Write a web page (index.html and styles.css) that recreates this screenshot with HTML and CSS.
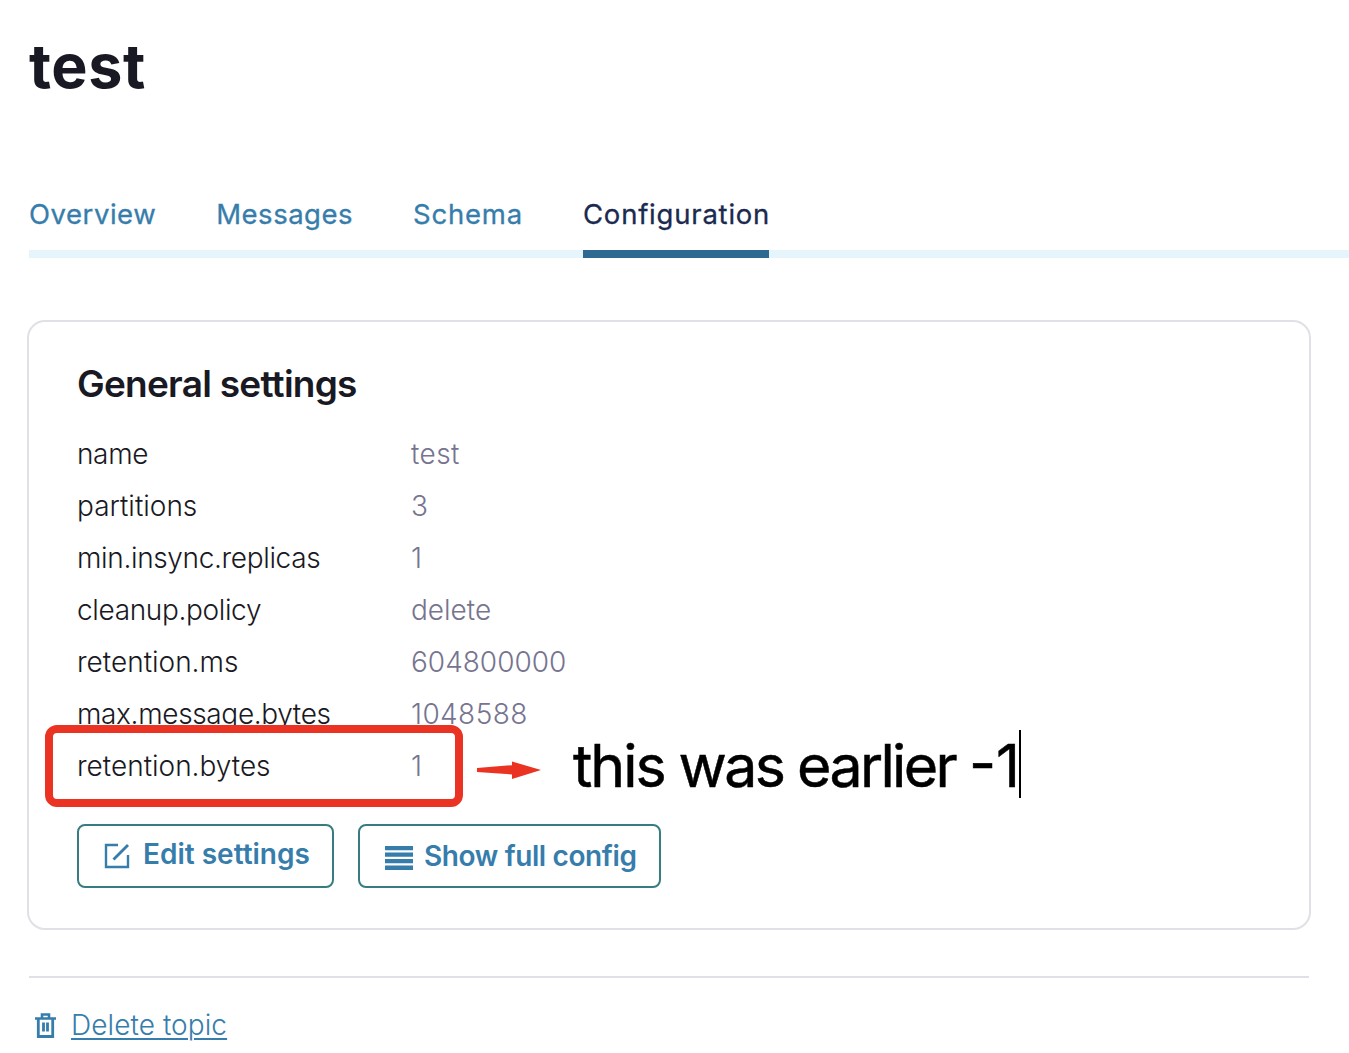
FILE: index.html
```html
<!DOCTYPE html>
<html lang="en">
<head>
<meta charset="utf-8">
<title>test</title>
<link rel="stylesheet" href="styles.css">
</head>
<body>
<main class="page">
  <h1 class="title">test</h1>
  <nav class="tabs">
    <a class="tab tab-overview">Overview</a>
    <a class="tab tab-messages">Messages</a>
    <a class="tab tab-schema">Schema</a>
    <a class="tab tab-active">Configuration</a>
  </nav>
  <section class="card">
    <h2 class="card-title">General settings</h2>
    <dl class="settings">
      <dt class="tight">name</dt><dd class="wide">test</dd>
      <dt>partitions</dt><dd>3</dd>
      <dt class="tight">min.insync.replicas</dt><dd>1</dd>
      <dt class="tight">cleanup.policy</dt><dd>delete</dd>
      <dt>retention.ms</dt><dd>604800000</dd>
      <dt class="tight">max.message.bytes</dt><dd class="wide">1048588</dd>
      <dt>retention.bytes</dt><dd>1</dd>
    </dl>
    <div class="actions">
      <button class="button button-edit">
        <svg class="icon-edit" width="26" height="26" viewBox="0 0 26 26" fill="none" stroke="currentColor" stroke-width="2.4"><path d="M14 2H2v22h22V12"/><path d="M9.500 16.500 24 2" stroke-width="2.8"/></svg>
        <span>Edit settings</span>
      </button>
      <button class="button button-config">
        <svg class="icon-list" width="28" height="24" viewBox="0 0 28 24" fill="currentColor"><path d="M0 0h28v4.300H0zM0 6.500h28v4.300H0zM0 13h28v4.300H0zM0 19.600h28v4.300H0z"/></svg>
        <span>Show full config</span>
      </button>
    </div>
    <div class="highlight"></div>
    <div class="note">
      <svg width="64" height="20" viewBox="0 0 64 20"><path d="M0 8 35 5.200V1.500L64 10 35 19V14.500L0 12z" fill="#ea3323"/></svg>
      <span class="note-text"><span class="note-word">this</span> was earlier <span class="note-value">-1</span></span>
      <span class="caret"></span>
    </div>
  </section>
  <footer class="footer">
    <svg width="22" height="25" viewBox="0 0 22 25" fill="none" stroke="currentColor"><path d="M0 5.500h21M7 4.500V1.500h7v3" stroke-width="2.600"/><path d="M3.300 6v17.500h14.400V6" stroke-width="2.800"/><path d="M8.500 9.500v9M12.500 9.500v9" stroke-width="2.800"/></svg>
    <a class="delete-link">Delete topic</a>
  </footer>
</main>
</body>
</html>
```
FILE: styles.css
```css
* { box-sizing: border-box; }
body {
  margin: 0;
  height: 1053px;
  overflow: hidden;
  background: #fff;
  color: #191924;
  font-family: Inter, "Liberation Sans", sans-serif;
}
.page { padding: 26px 0 0 29px; }
.title {
  margin: 0;
  height: 80px;
  font-size: 61px;
  line-height: 80px;
  font-weight: 700;
  letter-spacing: 0.6px;
}
.tabs {
  display: flex;
  gap: 60px;
  height: 68px;
  margin-top: 84px;
  border-bottom: 8px solid #e6f4fb;
}
.tab {
  height: 68px;
  line-height: 48px;
  font-size: 27.5px;
  font-weight: 400;
  -webkit-text-stroke: 0.3px;
  color: #377dab;
}
.tab-overview { letter-spacing: 0.54px; }
.tab-messages { letter-spacing: 0.5px; }
.tab-schema { letter-spacing: 0.8px; }
.tab-active {
  width: 186px;
  letter-spacing: 0.78px;
  color: #1b2a50;
  border-bottom: 8px solid #2d6990;
}
.card {
  position: relative;
  width: 1284px;
  height: 610px;
  margin: 62px 0 0 -2px;
  padding: 38px 48px 0;
  border: 2px solid #e0e0e6;
  border-radius: 18px;
}
.card-title {
  margin: 0;
  font-size: 37px;
  line-height: 48px;
  font-weight: 600;
  letter-spacing: -0.75px;
}
.settings {
  display: grid;
  grid-template-columns: 334px 1fr;
  grid-auto-rows: 52px;
  margin: 20px 0 0;
  font-size: 28px;
  line-height: 52px;
  font-weight: 300;
}
.settings dt, .settings dd { margin: 0; white-space: nowrap; }
.settings dd { color: #76748f; }
.settings .tight { letter-spacing: -0.35px; }
.settings .wide { letter-spacing: 0.4px; }
.actions { display: flex; gap: 24px; margin-top: 32px; }
.button {
  display: flex;
  align-items: center;
  height: 64px;
  padding: 0 0 0 25px;
  border: 2px solid #377c80;
  border-radius: 8px;
  background: #fff;
  color: #377dab;
  font: 600 28px/34px Inter, "Liberation Sans", sans-serif;
  white-space: nowrap;
}
.button-edit { width: 257px; gap: 13px; padding-bottom: 4px; }
.button-config { width: 303px; gap: 11px; letter-spacing: -0.38px; }
.icon-edit, .icon-list { position: relative; top: 2px; }
.highlight {
  position: absolute;
  left: 16px;
  top: 403px;
  width: 418px;
  height: 82px;
  border: 8px solid #ea3323;
  border-radius: 12px;
}
.note {
  position: absolute;
  left: 448px;
  top: 408px;
  height: 68px;
  display: flex;
  align-items: center;
}
.note svg { margin-top: 12px; }
.note-text {
  width: 446px;
  margin-left: 32px;
  padding-top: 4px;
  color: #000;
  font-size: 59px;
  line-height: 68px;
  font-weight: 400;
  letter-spacing: -2.65px;
  -webkit-text-stroke: 0.5px #000;
  white-space: nowrap;
}
.note-word { letter-spacing: -2px; }
.note-value { letter-spacing: 0; }
.caret { width: 2px; height: 68px; background: #000; }
.footer {
  display: flex;
  align-items: center;
  width: 1280px;
  margin-top: 46px;
  padding: 26px 0 0 6px;
  border-top: 2px solid #e0e0e6;
  color: #377dab;
}
.delete-link {
  margin-left: 14px;
  font-size: 28px;
  line-height: 42px;
  font-weight: 300;
  letter-spacing: 0.08px;
  text-decoration: underline;
  text-decoration-thickness: 2px;
  text-underline-offset: 3px;
}
```
